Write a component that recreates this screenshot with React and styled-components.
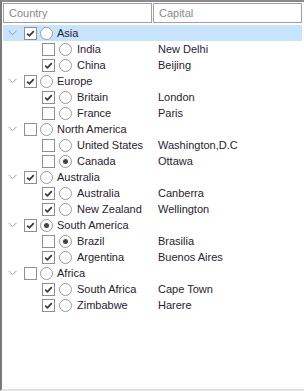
import React from "react";
import styled, { createGlobalStyle } from "styled-components";

const Global = createGlobalStyle`
  html, body { margin: 0; padding: 0; background: #fff; }
  body { font-family: "Liberation Sans", Arial, sans-serif; font-size: 11px; }
`;

const Frame = styled.div`
  width: 304px;
  height: 391px;
  box-sizing: border-box;
  border-left: 2px solid #7a7a7a;
  border-top: 2px solid #8c8c8c;
  border-bottom: 2px solid #e3e3e3;
  padding: 1px 2px 0 1px;
  background: #fff;
  display: flex;
  flex-direction: column;
`;

const Header = styled.div`
  display: grid;
  grid-template-columns: 149px 149px;
  column-gap: 1px;
  height: 20px;
  margin-bottom: 2px;
`;

const HeaderCell = styled.div`
  border: 1px solid #a0a0a0;
  color: #8a8a8a;
  padding-left: 5px;
  line-height: 18px;
  box-sizing: border-box;
`;

const Body = styled.div`
  display: flex;
  flex-direction: column;
`;

const Row = styled.div`
  display: grid;
  grid-template-columns: 150px 1fr;
  height: 16px;
  line-height: 16px;
  background: ${(p) => (p.$selected ? "#c7e4fc" : "transparent")};
  color: #2a2230;
`;

const CountryCell = styled.div`
  display: flex;
  align-items: center;
  padding-left: ${(p) => p.$level * 18}px;
  white-space: nowrap;
`;

const Expander = styled.div`
  width: 21px;
  height: 16px;
  display: flex;
  align-items: center;
  padding-left: 5px;
  box-sizing: border-box;
`;

const Box = styled.div`
  width: 13px;
  height: 13px;
  box-sizing: border-box;
  border: 1px solid #8f8f8f;
  background: #fff;
  display: flex;
  align-items: center;
  justify-content: center;
`;

const Radio = styled.div`
  width: 13px;
  height: 13px;
  margin-left: ${(p) => (p.$level ? 4 : 3)}px;
  box-sizing: border-box;
  border: 1px solid #9a9a9a;
  border-radius: 50%;
  background: #fff;
  display: flex;
  align-items: center;
  justify-content: center;
`;

const Dot = styled.div`
  width: 5px;
  height: 5px;
  border-radius: 50%;
  background: #444;
`;

const Label = styled.span`
  margin-left: ${(p) => (p.$level ? 5 : 4)}px;
`;

const CapitalCell = styled.div`
  padding-left: 5px;
  white-space: nowrap;
`;

const Chevron = () => (
  <svg width="9" height="6" viewBox="0 0 9 6">
    <path d="M0.5 0.8 L4.5 4.8 L8.5 0.8" fill="none" stroke="#9c9c9c" strokeWidth="1" />
  </svg>
);

const Check = () => (
  <svg width="11" height="11" viewBox="0 0 11 11">
    <path d="M2.2 5.6 L4.4 7.8 L8.8 3.2" fill="none" stroke="#3a3a3a" strokeWidth="1.8" />
  </svg>
);

const data = [
  { name: "Asia", checked: true, radio: false, selected: true, children: [
    { name: "India", capital: "New Delhi", checked: false },
    { name: "China", capital: "Beijing", checked: true },
  ]},
  { name: "Europe", checked: true, children: [
    { name: "Britain", capital: "London", checked: true },
    { name: "France", capital: "Paris", checked: false },
  ]},
  { name: "North America", checked: false, children: [
    { name: "United States", capital: "Washington,D.C", checked: false },
    { name: "Canada", capital: "Ottawa", checked: false, radio: true },
  ]},
  { name: "Australia", checked: true, children: [
    { name: "Australia", capital: "Canberra", checked: true },
    { name: "New Zealand", capital: "Wellington", checked: true },
  ]},
  { name: "South America", checked: true, radio: true, children: [
    { name: "Brazil", capital: "Brasilia", checked: false, radio: true },
    { name: "Argentina", capital: "Buenos Aires", checked: true },
  ]},
  { name: "Africa", checked: false, children: [
    { name: "South Africa", capital: "Cape Town", checked: true },
    { name: "Zimbabwe", capital: "Harere", checked: true },
  ]},
];

const TreeRow = ({ item, level }) => (
  <Row $selected={item.selected}>
    <CountryCell $level={level}>
      <Expander>{level === 0 && <Chevron />}</Expander>
      <Box>{item.checked && <Check />}</Box>
      <Radio $level={level}>{item.radio && <Dot />}</Radio>
      <Label $level={level}>{item.name}</Label>
    </CountryCell>
    <CapitalCell>{item.capital || ""}</CapitalCell>
  </Row>
);

export default function App() {
  return (
    <>
      <Global />
      <Frame>
        <Header>
          <HeaderCell>Country</HeaderCell>
          <HeaderCell>Capital</HeaderCell>
        </Header>
        <Body>
          {data.map((g) => (
            <React.Fragment key={g.name}>
              <TreeRow item={g} level={0} />
              {g.children.map((c) => (
                <TreeRow key={c.name + g.name} item={c} level={1} />
              ))}
            </React.Fragment>
          ))}
        </Body>
      </Frame>
    </>
  );
}
